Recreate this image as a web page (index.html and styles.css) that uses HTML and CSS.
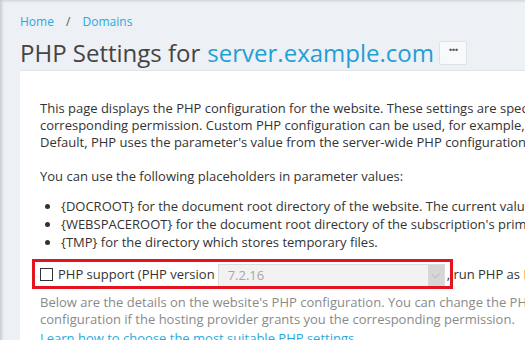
FILE: index.html
```html
<!DOCTYPE html>
<html lang="en">
<head>
    <meta charset="UTF-8">
    <title>PHP Settings for server.example.com</title>
    <link rel="stylesheet" href="styles.css">
</head>
<body>

    <!-- Page header -->
    <div class="page-header">
        <div class="breadcrumbs">
            <a href="#">Home</a>
            <span class="sep">/</span>
            <a href="#">Domains</a>
        </div>
        <h1 class="page-title">
            PHP Settings for <a href="#">server.example.com</a>
            <button class="more-btn">&middot;&middot;&middot;</button>
        </h1>
    </div>

    <!-- Main content box -->
    <div class="content-box">
        <p>This page displays the PHP configuration for the website. These settings are specified by the hosting provider.<br>
        corresponding permission. Custom PHP configuration can be used, for example, if a web application needs special settings.<br>
        Default, PHP uses the parameter's value from the server-wide PHP configuration.</p>

        <p class="lead">You can use the following placeholders in parameter values:</p>
        <ul class="placeholders">
            <li>{DOCROOT} for the document root directory of the website. The current value is shown.</li>
            <li>{WEBSPACEROOT} for the document root directory of the subscription's primary domain.</li>
            <li>{TMP} for the directory which stores temporary files.</li>
        </ul>

        <div class="php-row">
            <input class="php-check" type="checkbox" id="phpSupport">
            <label for="phpSupport">PHP support (PHP version</label>
            <span class="select">
                <span class="select-value">7.2.16</span>
                <span class="select-arrow">
                    <svg width="9" height="6" viewBox="0 0 9 6"><path d="M0.5 0.8 L4.5 4.8 L8.5 0.8" fill="none" stroke="#b3b3b3" stroke-width="1"/></svg>
                </span>
            </span>
            <span class="after">, run PHP as FastCGI application)</span>
            <!-- red annotation frame -->
            <span class="highlight"></span>
        </div>

        <p class="hint">Below are the details on the website's PHP configuration. You can change the PHP<br>
        configuration if the hosting provider grants you the corresponding permission.</p>
        <p class="hint"><a href="#">Learn how to choose the most suitable PHP settings</a></p>
    </div>

</body>
</html>
```

FILE: styles.css
```css
* {
    box-sizing: border-box;
}

body {
    margin: 0;
    background: #edf0f4;
    font-family: 'Open Sans', sans-serif;
    font-size: 13px;
    color: #333;
    height: 340px;
    overflow: hidden;
    box-shadow: inset 3px 2px 3px -1px rgba(0, 0, 0, 0.15);
}

a {
    color: #28aade;
    text-decoration: none;
}

/* Header */
.page-header {
    padding: 13px 0 0 20px;
}

.breadcrumbs {
    font-size: 12px;
    line-height: 18px;
}

.breadcrumbs .sep {
    color: #555;
    margin: 0 9px;
}

.page-title {
    margin: 6px 0 0;
    height: 32px;
    font-size: 24px;
    font-weight: normal;
    line-height: 32px;
    color: #444;
    display: flex;
    align-items: center;
    white-space: nowrap;
}

.page-title a {
    color: #1f9fd4;
    margin-left: 7px;
}

.more-btn {
    margin-left: 5px;
    width: 28px;
    height: 24px;
    padding: 0 0 6px;
    background: #f8f9fb;
    border: 1px solid #dfe2e7;
    border-radius: 2px;
    color: #555;
    font-size: 14px;
    font-weight: bold;
    line-height: 14px;
    letter-spacing: -1px;
    font-family: 'Open Sans', sans-serif;
}

/* Content box */
.content-box {
    margin: 1px 0 0 20px;
    width: 900px;
    background: #fff;
    padding: 29px 0 0 20px;
    border-top: 1px solid #e0e3e8;
    white-space: nowrap;
    line-height: 17px;
}

.content-box p {
    margin: 0 0 17px;
}

.content-box p.lead {
    margin-bottom: 12px;
}

.placeholders {
    margin: 0 0 8px;
    padding-left: 21px;
    line-height: 18px;
}

/* PHP support row */
.php-row {
    position: relative;
    display: flex;
    align-items: center;
    height: 30px;
    margin-bottom: 5px;
}

.highlight {
    position: absolute;
    left: -8px;
    top: 0;
    width: 421px;
    height: 30px;
    border: 3px solid #e3141f;
}

.php-check {
    width: 13px;
    height: 13px;
    margin: 1px 5px 0 0;
    appearance: none;
    border: 1px solid #333;
    background: #fff;
}

.select {
    display: flex;
    margin: 3px 0 0 3px;
    width: 227px;
    height: 24px;
    background: #f2f2f2;
    border: 1px solid #dcdcdc;
    color: #a6a6a6;
}

.select-value {
    flex: 1;
    padding-left: 9px;
    line-height: 21px;
}

.select-arrow {
    width: 16px;
    background: #d6d6d6;
    display: flex;
    align-items: center;
    justify-content: center;
}

.after {
    margin-left: 2px;
}

.content-box p.hint {
    color: #8a8a8a;
    margin: 0 0 2px;
}
```
